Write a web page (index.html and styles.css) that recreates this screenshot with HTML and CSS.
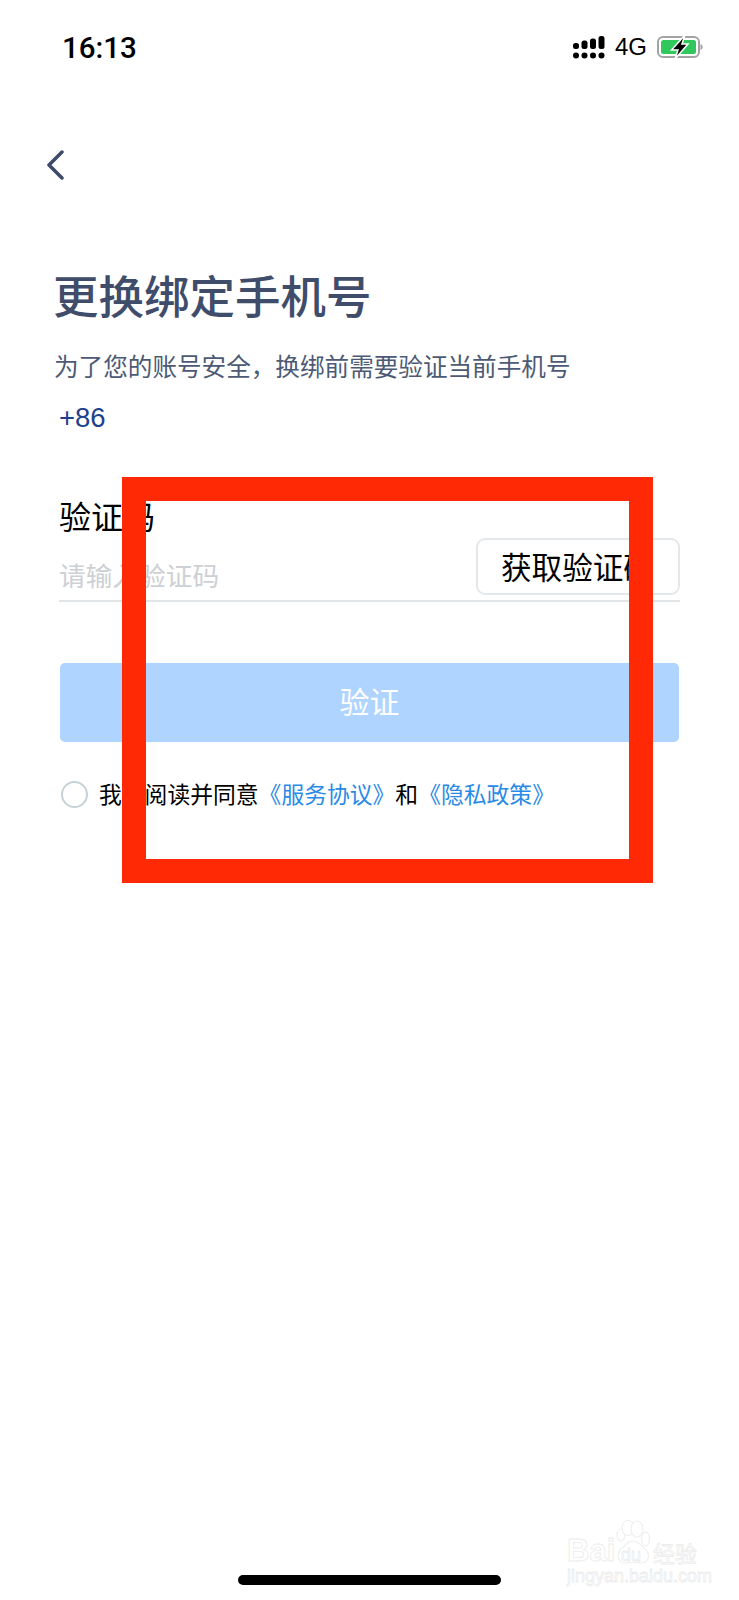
FILE: index.html
```html
<!DOCTYPE html>
<html lang="zh-CN">
<head>
    <meta charset="UTF-8">
    <title>更换绑定手机号</title>
    <link rel="stylesheet" href="styles.css">
</head>
<body>
    <!-- Status bar -->
    <div class="status-bar">
        <span class="time">16:13</span>
        <div class="status-icons">
            <svg class="signal" width="32" height="23" viewBox="0 0 32 23">
                <rect x="0" y="7" width="6" height="6" rx="2.5"/>
                <rect x="8.5" y="4.5" width="6" height="8.5" rx="2.5"/>
                <rect x="17" y="2.5" width="6" height="10.5" rx="2.5"/>
                <rect x="25.5" y="0" width="6" height="13" rx="2.5"/>
                <circle cx="3" cy="19.5" r="3"/>
                <circle cx="11.5" cy="19.5" r="3"/>
                <circle cx="20" cy="19.5" r="3"/>
                <circle cx="28.5" cy="19.5" r="3"/>
            </svg>
            <span class="network">4G</span>
            <svg class="battery" width="46" height="24" viewBox="0 0 46 24">
                <rect x="1" y="2" width="41" height="20" rx="5" fill="#fff" stroke="#a3a3a3" stroke-width="2"/>
                <rect x="4" y="5" width="35" height="14" rx="2.5" fill="#30c85c"/>
                <path d="M43.5 9v6c1.400-.5 2.200-1.600 2.200-3s-.8-2.500-2.200-3z" fill="#a3a3a3"/>
                <path d="M28 0 14.500 15H21l-3 9L31 9h-6z" fill="#000" stroke="#fff" stroke-width="1.500"/>
            </svg>
        </div>
    </div>

    <div class="back-row">
        <svg width="19" height="30" viewBox="0 0 19 30">
            <path d="M16 2 3 15l13 13" fill="none" stroke="#3d4b69" stroke-width="3.500" stroke-linecap="round" stroke-linejoin="round"/>
        </svg>
    </div>

    <h1 class="title">更换绑定手机号</h1>
    <p class="subtitle">为了您的账号安全，换绑前需要验证当前手机号</p>
    <p class="phone">+86</p>

    <!-- Code form -->
    <div class="form-box">
        <div class="field-label">验证码</div>
        <div class="code-row">
            <span class="placeholder">请输入验证码</span>
            <span class="code-btn">获取验证码</span>
        </div>
        <div class="submit-btn">验证</div>
        <div class="agree-row">
            <span class="radio"></span>
            <span class="agree-text">我已阅读并同意<a>《服务协议》</a>和<a>《隐私政策》</a></span>
        </div>
    </div>

    <div class="home-bar"></div>

    <!-- Red annotation frame over the form -->
    <div class="red-frame"></div>

    <!-- Watermark -->
    <div class="watermark">
        <div class="wm-top">
            <span class="wm-bai">Bai</span>
            <svg class="wm-paw" width="34" height="44" viewBox="0 0 34 44">
                <g fill="#fff" stroke="#efefef" stroke-width="1.200">
                    <ellipse cx="5" cy="15" rx="4" ry="6"/>
                    <ellipse cx="12" cy="8" rx="6" ry="7.500"/>
                    <ellipse cx="21" cy="9" rx="6" ry="8"/>
                    <ellipse cx="29.500" cy="19" rx="4" ry="7"/>
                    <path d="M16 21c-5 0-6 4-10 7-5 4-6 15 4 15 3 0 4-1 7-1s5 1 8 1c9 0 9-10 4-14-4-3-6-8-13-8z"/>
                </g>
            </svg>
            <span class="wm-du">du</span>
            <span class="wm-jy">经验</span>
        </div>
        <div class="wm-url">jingyan.baidu.com</div>
    </div>
</body>
</html>
```

FILE: styles.css
```css
html, body {
    margin: 0;
    padding: 0;
}
body {
    position: relative;
    width: 739px;
    height: 1600px;
    overflow: hidden;
    background: #fff;
    color: #000;
    font-family: "Noto Sans CJK SC", "Liberation Sans", sans-serif;
    display: flex;
    flex-direction: column;
}
.status-bar {
    display: flex;
    justify-content: space-between;
    align-items: center;
    height: 24px;
    margin-top: 35px;
    padding: 0 36px 0 62px;
}
.time {
    padding-top: 2px;
    font-family: Roboto, sans-serif;
    font-weight: 500;
    font-size: 29.500px;
}
.status-icons {
    display: flex;
    align-items: center;
}
.network {
    font-family: "Liberation Sans", sans-serif;
    font-size: 24px;
    margin: 0 10px;
}
.back-row {
    height: 30px;
    margin-top: 91px;
    padding-left: 46px;
}
.title {
    margin: 84px 0 0 53px;
    font-size: 45.500px;
    line-height: 60px;
    font-weight: 500;
    color: #3f4d6b;
}
.subtitle {
    margin: 23px 0 0 54px;
    font-size: 24.600px;
    line-height: 36px;
    color: #4d5a75;
}
.phone {
    margin: 17px 0 0 59px;
    font-family: "Liberation Sans", sans-serif;
    font-size: 27.500px;
    line-height: 36px;
    color: #1d418c;
}
.form-box {
    margin: 0 59px;
}
.field-label {
    margin-top: 55px;
    font-size: 32px;
    line-height: 48px;
}
.code-row {
    display: flex;
    justify-content: space-between;
    align-items: flex-end;
    height: 60px;
    margin-top: -4px;
    border-bottom: 2px solid #e2e5e8;
    padding-bottom: 5px;
}
.placeholder {
    margin-bottom: -2px;
    font-size: 26.700px;
    line-height: 44px;
    color: #cdd0d4;
}
.code-btn {
    box-sizing: border-box;
    width: 204px;
    height: 57px;
    padding-left: 23px;
    border: 2px solid #e4e8ea;
    border-radius: 9px;
    font-size: 30.600px;
    line-height: 53px;
    white-space: nowrap;
    overflow: hidden;
}
.submit-btn {
    margin: 61px 1px 0;
    height: 79px;
    background: #aed4ff;
    border-radius: 5px;
    color: #fff;
    font-size: 30px;
    line-height: 75px;
    text-align: center;
}
.agree-row {
    display: flex;
    align-items: center;
    gap: 11px;
    margin: 36px 0 0 2px;
}
.radio {
    box-sizing: border-box;
    width: 27px;
    height: 27px;
    border: 2px solid #c6d3d6;
    border-radius: 50%;
}
.agree-text {
    font-size: 22.800px;
    line-height: 32px;
}
.agree-text a {
    color: #2a8ae6;
}
.home-bar {
    width: 263px;
    height: 10px;
    margin: auto auto 15px;
    background: #000;
    border-radius: 5px;
}
.red-frame {
    position: absolute;
    left: 122px;
    top: 477px;
    width: 483px;
    height: 358px;
    border: 24px solid #ff2a05;
}
.watermark {
    position: absolute;
    left: 567px;
    top: 1520px;
    width: 135px;
    color: #fff;
    font-family: "Liberation Sans", sans-serif;
    -webkit-text-stroke: 0.8px #ececec;
}
.wm-top {
    position: relative;
    height: 47px;
}
.wm-bai {
    position: absolute;
    left: 0;
    top: 17px;
    font-size: 31px;
    line-height: 28px;
    font-weight: 700;
}
.wm-paw {
    position: absolute;
    left: 49px;
    top: 0;
}
.wm-du {
    position: absolute;
    left: 54px;
    top: 26px;
    font-size: 18px;
    line-height: 18px;
}
.wm-jy {
    position: absolute;
    left: 86px;
    top: 19px;
    font-family: "Noto Sans CJK SC", sans-serif;
    font-size: 22px;
    line-height: 26px;
}
.wm-url {
    font-size: 18px;
    line-height: 18px;
    white-space: nowrap;
}
```
